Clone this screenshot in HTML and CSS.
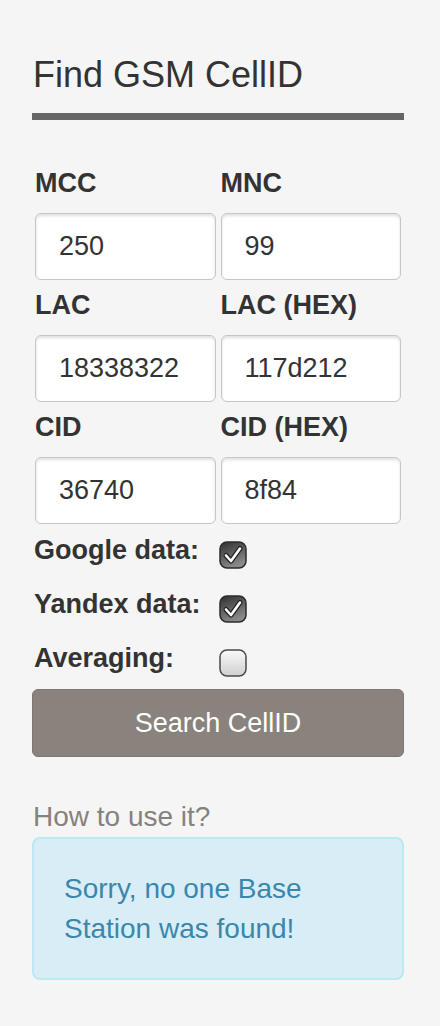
FILE: index.html
```html
<!DOCTYPE html>
<html lang="en">

<head>
    <meta charset="UTF-8">
    <meta name="viewport" content="width=device-width, initial-scale=1.0">
    <title>Find GSM CellID</title>
    <link rel="stylesheet" href="styles.css">
</head>

<body>

    <div class="page">
        <h1 class="title">Find GSM CellID</h1>

        <form class="search">
            <div class="fields">
                <div class="field">
                    <label>MCC</label>
                    <input type="text" value="250">
                </div>
                <div class="field">
                    <label>MNC</label>
                    <input type="text" value="99">
                </div>
                <div class="field">
                    <label>LAC</label>
                    <input type="text" value="18338322">
                </div>
                <div class="field">
                    <label>LAC (HEX)</label>
                    <input type="text" value="117d212">
                </div>
                <div class="field">
                    <label>CID</label>
                    <input type="text" value="36740">
                </div>
                <div class="field">
                    <label>CID (HEX)</label>
                    <input type="text" value="8f84">
                </div>
            </div>

            <div class="checks">
                <span class="checkLabel">Google data:</span>
                <svg class="box" width="28" height="28" viewBox="0 0 28 28">
                    <defs>
                        <linearGradient id="dark" x1="0" y1="0" x2="0.4" y2="1">
                            <stop offset="0" stop-color="#2e2e2e"/>
                            <stop offset="1" stop-color="#8a8a8a"/>
                        </linearGradient>
                        <linearGradient id="light" x1="0" y1="0" x2="0" y2="1">
                            <stop offset="0" stop-color="#fafafa"/>
                            <stop offset="1" stop-color="#cfcfcf"/>
                        </linearGradient>
                    </defs>
                    <rect x="1" y="1" width="26" height="26" rx="7" fill="url(#dark)" stroke="#2b2b2b" stroke-width="1.5"/>
                    <path d="M7 14.5 L12 20 L21 7.5" fill="none" stroke="#222" stroke-width="5" stroke-linecap="round" stroke-linejoin="round"/>
                    <path d="M7 14.5 L12 20 L21 7.5" fill="none" stroke="#fff" stroke-width="2.6" stroke-linecap="round" stroke-linejoin="round"/>
                </svg>

                <span class="checkLabel">Yandex data:</span>
                <svg class="box" width="28" height="28" viewBox="0 0 28 28">
                    <rect x="1" y="1" width="26" height="26" rx="7" fill="url(#dark)" stroke="#2b2b2b" stroke-width="1.5"/>
                    <path d="M7 14.5 L12 20 L21 7.5" fill="none" stroke="#222" stroke-width="5" stroke-linecap="round" stroke-linejoin="round"/>
                    <path d="M7 14.5 L12 20 L21 7.5" fill="none" stroke="#fff" stroke-width="2.6" stroke-linecap="round" stroke-linejoin="round"/>
                </svg>

                <span class="checkLabel">Averaging:</span>
                <svg class="box" width="28" height="28" viewBox="0 0 28 28">
                    <rect x="1" y="1" width="26" height="26" rx="7" fill="url(#light)" stroke="#4a4a4a" stroke-width="1.5"/>
                </svg>
            </div>

            <button type="button" class="btn">Search CellID</button>
        </form>

        <div class="howto">How to use it?</div>
        <div class="alert">Sorry, no one Base Station was found!</div>
    </div>

</body>

</html>
```

FILE: styles.css
```css
* {
    margin: 0;
    padding: 0;
    box-sizing: border-box;
}

body {
    background-color: #f5f5f5;
    font-family: "Liberation Sans", Arial, sans-serif;
    color: #333;
}

.page {
    width: 372px;
    margin-left: 32px;
    padding-top: 50px;
}

.title {
    font-size: 36px;
    font-weight: normal;
    line-height: 50px;
    padding-left: 1px;
    padding-bottom: 13px;
    border-bottom: 7px solid #666;
    margin-bottom: 43px;
}

.fields {
    display: grid;
    grid-template-columns: 1fr 1fr;
    column-gap: 5px;
    row-gap: 5px;
    padding: 0 3px;
}

.field {
    display: flex;
    flex-direction: column;
}

.field label {
    font-size: 27px;
    font-weight: bold;
    line-height: 40px;
    margin-bottom: 10px;
}

.field input {
    height: 67px;
    width: 100%;
    padding: 0 10px 0 23px;
    font-family: inherit;
    font-size: 27px;
    color: #333;
    background-color: #fff;
    border: 1px solid #c6c6c6;
    border-radius: 6px;
    box-shadow: inset 0 2px 3px rgba(0, 0, 0, 0.12);
    outline: none;
}

.checks {
    display: grid;
    grid-template-columns: 185px auto;
    row-gap: 14px;
    margin-top: 6px;
    padding-left: 2px;
}

.checkLabel {
    font-size: 27px;
    font-weight: bold;
    line-height: 40px;
}

.box {
    display: block;
    margin-top: 11px;
}

.btn {
    display: block;
    width: 100%;
    height: 68px;
    margin-top: 11px;
    font-family: inherit;
    font-size: 27px;
    color: #fff;
    background-color: #8a837d;
    border: 1px solid #7e7771;
    border-radius: 6px;
    cursor: pointer;
}

.howto {
    margin-top: 40px;
    padding-left: 1px;
    font-size: 28px;
    line-height: 40px;
    color: #87817c;
}

.alert {
    padding: 30px 70px 29px 30px;
    font-size: 28px;
    line-height: 40px;
    color: #3a87ad;
    background-color: #d9edf7;
    border: 2px solid #bce8f1;
    border-radius: 8px;
}
```
